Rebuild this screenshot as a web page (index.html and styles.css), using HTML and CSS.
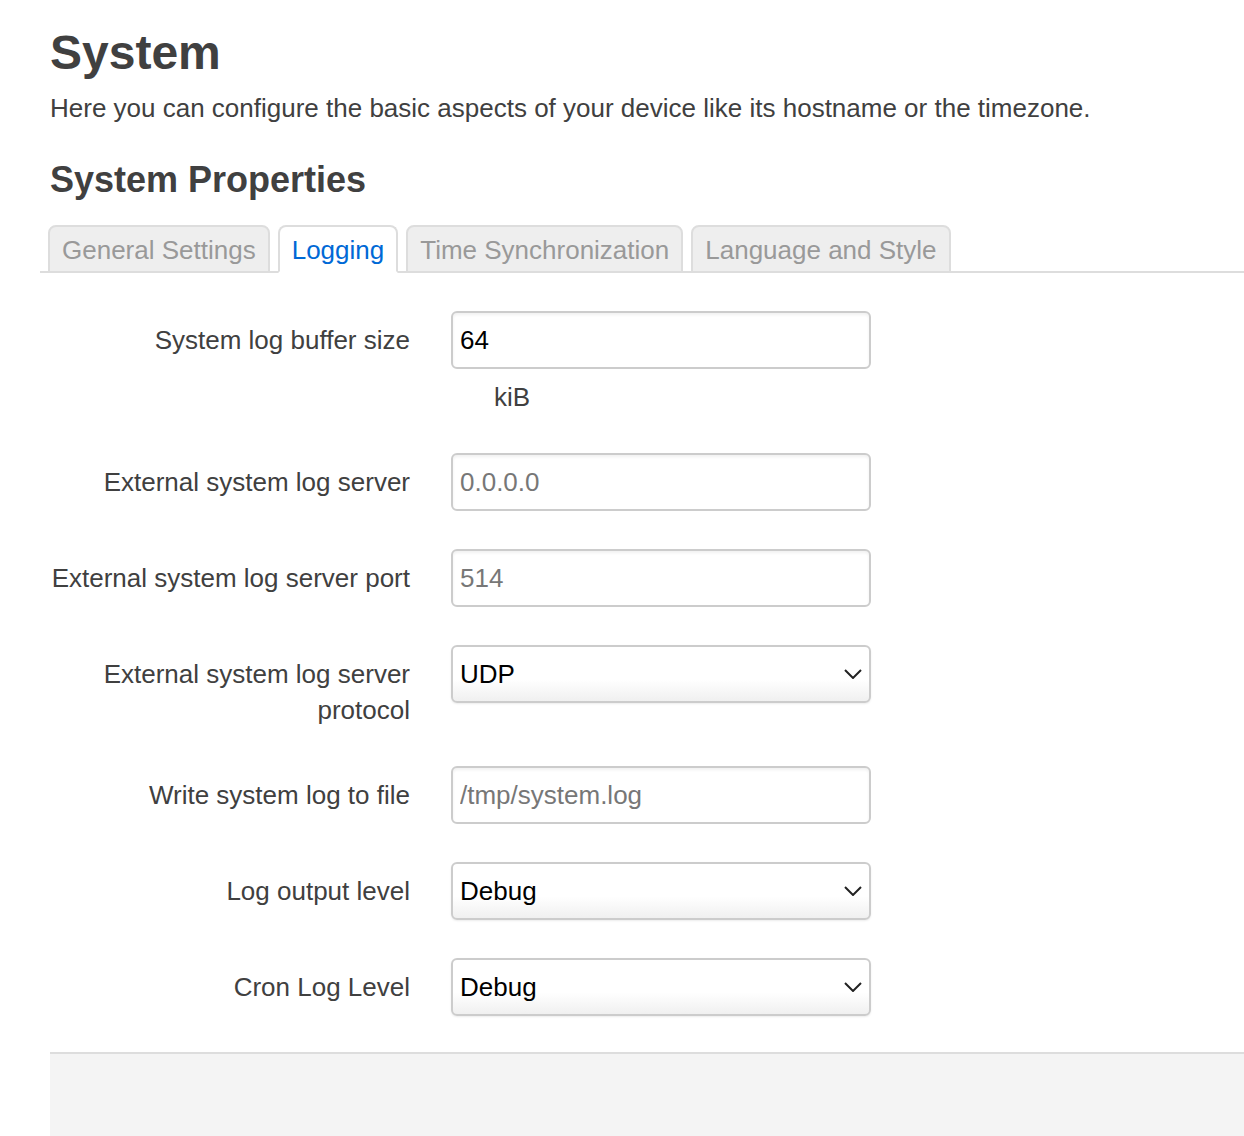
FILE: index.html
```html
<!DOCTYPE html>
<html lang="en">
<head>
<meta charset="utf-8">
<title>System</title>
<link rel="stylesheet" href="styles.css">
</head>
<body>
<div class="main">
  <h2 class="page-title">System</h2>
  <div class="page-desc">Here you can configure the basic aspects of your device like its hostname or the timezone.</div>
  <h3 class="section-title">System Properties</h3>
  <ul class="tabmenu">
    <li class="tab">General Settings</li>
    <li class="tab active">Logging</li>
    <li class="tab">Time Synchronization</li>
    <li class="tab">Language and Style</li>
  </ul>
  <div class="form">
    <div class="row">
      <label class="title">System log buffer size</label>
      <div class="field">
        <input class="text" type="text" value="64">
        <div class="desc">kiB</div>
      </div>
    </div>
    <div class="row">
      <label class="title">External system log server</label>
      <div class="field"><input class="text" type="text" placeholder="0.0.0.0"></div>
    </div>
    <div class="row">
      <label class="title">External system log server port</label>
      <div class="field"><input class="text" type="text" placeholder="514"></div>
    </div>
    <div class="row">
      <label class="title">External system log server protocol</label>
      <div class="field">
        <div class="select-wrap">
          <select class="select"><option>UDP</option><option>TCP</option></select>
          <svg class="chev" width="18" height="10" viewBox="0 0 18 10"><path d="M1 1 L9 9 L17 1" fill="none" stroke="#222" stroke-width="2"/></svg>
        </div>
      </div>
    </div>
    <div class="row">
      <label class="title">Write system log to file</label>
      <div class="field"><input class="text" type="text" placeholder="/tmp/system.log"></div>
    </div>
    <div class="row">
      <label class="title">Log output level</label>
      <div class="field">
        <div class="select-wrap">
          <select class="select"><option>Debug</option></select>
          <svg class="chev" width="18" height="10" viewBox="0 0 18 10"><path d="M1 1 L9 9 L17 1" fill="none" stroke="#222" stroke-width="2"/></svg>
        </div>
      </div>
    </div>
    <div class="row">
      <label class="title">Cron Log Level</label>
      <div class="field">
        <div class="select-wrap">
          <select class="select"><option>Debug</option></select>
          <svg class="chev" width="18" height="10" viewBox="0 0 18 10"><path d="M1 1 L9 9 L17 1" fill="none" stroke="#222" stroke-width="2"/></svg>
        </div>
      </div>
    </div>
  </div>
  <div class="page-actions"></div>
</div>
</body>
</html>
```

FILE: styles.css
```css
html, body {
  margin: 0;
  padding: 0;
  background: #fff;
}
body {
  font-family: "Liberation Sans", Arial, sans-serif;
  color: #404040;
  font-size: 26px;
  line-height: 36px;
  overflow: hidden;
}
.main {
  padding-left: 50px;
  height: 1136px;
  overflow: hidden;
  box-sizing: border-box;
  padding-top: 1px;
}
.page-title {
  margin: 25px 0 0 0;
  font-size: 48px;
  line-height: 54px;
  font-weight: bold;
  color: #404040;
}
.page-desc {
  margin-top: 10px;
  font-size: 26px;
  line-height: 36px;
}
.section-title {
  margin: 34px 0 0 0;
  font-size: 36px;
  line-height: 40px;
  font-weight: bold;
  color: #404040;
}
.tabmenu {
  list-style: none;
  margin: 25px 0 0 -10px;
  padding: 0 0 0 8px;
  display: flex;
  gap: 8px;
  border-bottom: 2px solid #ddd;
}
.tab {
  margin-bottom: -2px;
  padding: 5px 12px 3px 12px;
  border: 2px solid #ddd;
  border-radius: 8px 8px 0 0;
  background: #eee;
  color: #999;
  font-size: 26px;
  line-height: 36px;
  white-space: nowrap;
}
.tab.active {
  background: #fff;
  color: #0069d6;
  border-bottom-color: #fff;
}
.form {
  margin-top: 38px;
  display: flex;
  flex-direction: column;
  gap: 38px;
}
.row {
  display: flex;
  align-items: flex-start;
}
.title {
  width: 360px;
  flex: 0 0 360px;
  text-align: right;
  padding-top: 11px;
  font-size: 26px;
  line-height: 36px;
  color: #404040;
}
.field {
  margin-left: 41px;
}
.text, .select {
  box-sizing: border-box;
  width: 420px;
  height: 58px;
  margin: 0;
  padding: 9px 7px;
  border: 2px solid #ccc;
  border-radius: 6px;
  font-family: "Liberation Sans", Arial, sans-serif;
  font-size: 26px;
  line-height: 36px;
  color: #000;
  background: #fff;
  box-shadow: inset 0 2px 3px rgba(0, 0, 0, 0.06);
  outline: none;
  display: block;
}
.text::placeholder {
  color: #777;
}
.select {
  -webkit-appearance: none;
  appearance: none;
  padding: 9px 40px 9px 7px;
  background: linear-gradient(#fff 0%, #fff 60%, #f0f0f0 100%);
  box-shadow: 0 1px 2px rgba(0, 0, 0, 0.08);
}
.select-wrap {
  position: relative;
  width: 420px;
}
.chev {
  position: absolute;
  right: 9px;
  top: 24px;
  pointer-events: none;
}
.desc {
  margin-top: 10px;
  padding-left: 43px;
  font-size: 26px;
  line-height: 36px;
  color: #404040;
}
.page-actions {
  margin-top: 36px;
  border-top: 2px solid #ddd;
  background: #f4f4f4;
  height: 100px;
}
```
